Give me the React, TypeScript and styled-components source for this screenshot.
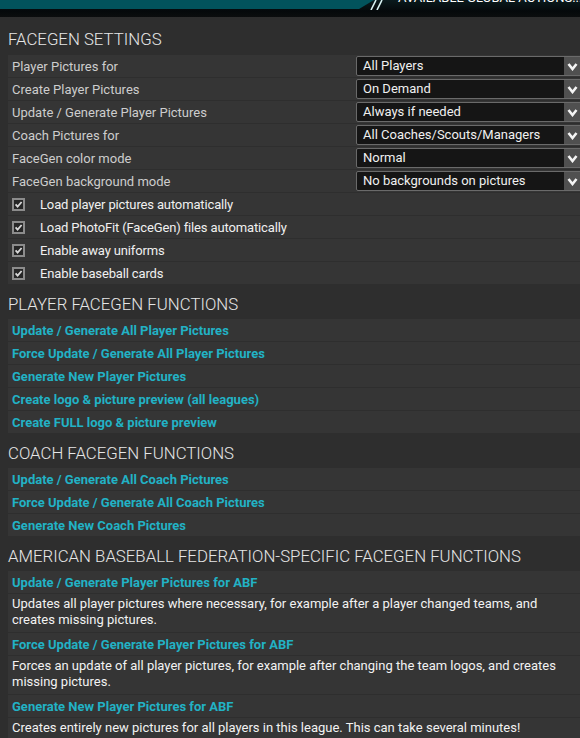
import styled, { createGlobalStyle } from "styled-components";

const GlobalStyle = createGlobalStyle`
    html, body {
        margin: 0;
        padding: 0;
        background: #2e2e2e;
        overflow: hidden;
    }
    body {
        font-family: Roboto, "Liberation Sans", sans-serif;
        width: 580px;
        height: 738px;
    }
`

const settings = [
    {label: "Player Pictures for", value: "All Players"},
    {label: "Create Player Pictures", value: "On Demand"},
    {label: "Update / Generate Player Pictures", value: "Always if needed"},
    {label: "Coach Pictures for", value: "All Coaches/Scouts/Managers"},
    {label: "FaceGen color mode", value: "Normal"},
    {label: "FaceGen background mode", value: "No backgrounds on pictures"},
];

const checks = [
    "Load player pictures automatically",
    "Load PhotoFit (FaceGen) files automatically",
    "Enable away uniforms",
    "Enable baseball cards",
];

const playerLinks = [
    "Update / Generate All Player Pictures",
    "Force Update / Generate All Player Pictures",
    "Generate New Player Pictures",
    "Create logo & picture preview (all leagues)",
    "Create FULL logo & picture preview",
];

const coachLinks = [
    "Update / Generate All Coach Pictures",
    "Force Update / Generate All Coach Pictures",
    "Generate New Coach Pictures",
];

const leagueLinks = [
    {
        link: "Update / Generate Player Pictures for ABF",
        text: "Updates all player pictures where necessary, for example after a player changed teams, and creates missing pictures.",
    },
    {
        link: "Force Update / Generate Player Pictures for ABF",
        text: "Forces an update of all player pictures, for example after changing the team logos, and creates missing pictures.",
    },
    {
        link: "Generate New Player Pictures for ABF",
        text: "Creates entirely new pictures for all players in this league. This can take several minutes!",
    },
];

const Chevron = () => (
    <svg width="11" height="9" viewBox="0 0 11 9">
        <polyline points="1.5,2 5.5,7 9.5,2" fill="none" stroke="#f4f4f4" strokeWidth="2.6"/>
    </svg>
);

const CheckIcon = () => (
    <svg width="13" height="13" viewBox="0 0 13 13">
        <rect x="1" y="1" width="11" height="11" fill="#262626" stroke="#8c8c8c" strokeWidth="2"/>
        <polyline points="3.6,6.4 5.6,8.6 9.6,4" fill="none" stroke="#d8d8d8" strokeWidth="1.8"/>
    </svg>
);

export default function App() {
    return (
        <Page>
            <GlobalStyle/>
            <TopBar>
                <TealBand/>
                <Slashes width="16" height="10" viewBox="0 0 16 10">
                    <line x1="6" y1="0" x2="1" y2="10" stroke="#d9f3f3" strokeWidth="1.6"/>
                    <line x1="12" y1="0" x2="7" y2="10" stroke="#d9f3f3" strokeWidth="1.6"/>
                </Slashes>
                <TopTitle>Available Global Actions...</TopTitle>
            </TopBar>
            <Panel>
                <Heading $first>FaceGen Settings</Heading>
                {settings.map((s) => (
                    <Row key={s.label}>
                        <Label>{s.label}</Label>
                        <Select>
                            <SelectValue>{s.value}</SelectValue>
                            <SelectArrow><Chevron/></SelectArrow>
                        </Select>
                    </Row>
                ))}
                {checks.map((c) => (
                    <CheckRow key={c}>
                        <CheckIcon/>
                        <CheckLabel>{c}</CheckLabel>
                    </CheckRow>
                ))}

                <Heading>Player FaceGen Functions</Heading>
                {playerLinks.map((l) => (
                    <Row key={l}><Link>{l}</Link></Row>
                ))}

                <Heading>Coach FaceGen Functions</Heading>
                {coachLinks.map((l) => (
                    <Row key={l}><Link>{l}</Link></Row>
                ))}

                <Heading>American Baseball Federation-specific FaceGen Functions</Heading>
                {leagueLinks.map((l) => (
                    <div key={l.link}>
                        <Row><Link>{l.link}</Link></Row>
                        <DescRow>{l.text}</DescRow>
                    </div>
                ))}
            </Panel>
        </Page>
    );
}

const Page = styled.div`
    width: 580px;
    height: 738px;
    overflow: hidden;
    background: #2e2e2e;
`
const TopBar = styled.div`
    height: 17px;
    display: flex;
    align-items: flex-start;
    overflow: hidden;
    background: linear-gradient(to bottom, #0a1a1d 0px, #05090b 11px, #0b0d0e 17px);
`
const TealBand = styled.div`
    width: 374px;
    height: 9px;
    flex-shrink: 0;
    background: #02535c;
    clip-path: polygon(0 0, 100% 0, 96% 100%, 0 100%);
`
const Slashes = styled.svg`
    flex-shrink: 0;
    margin-left: -4px;
`
const TopTitle = styled.div`
    margin-left: 12px;
    margin-top: -10px;
    font-size: 13px;
    line-height: 16px;
    color: #ffffff;
    text-transform: uppercase;
    white-space: nowrap;
`
const Panel = styled.div`
    padding-top: 3px;
    background: #2e2e2e;
`
const Heading = styled.h2<{ $first?: boolean }>`
    margin: 0;
    padding: 9px 0 ${(p) => (p.$first ? "6px" : "5px")} 8px;
    font-size: 16.8px;
    line-height: 20px;
    font-weight: 300;
    color: #e6e6e6;
    text-transform: uppercase;
    white-space: nowrap;
`
const Row = styled.div`
    margin: 0 0 1px 8px;
    height: 22px;
    padding-left: 4px;
    display: flex;
    align-items: center;
    background: #353535;
`
const Label = styled.span`
    width: 344px;
    flex-shrink: 0;
    font-size: 13px;
    color: #cdcdcd;
`
const Select = styled.div`
    width: 230px;
    height: 20px;
    flex-shrink: 0;
    box-sizing: border-box;
    display: flex;
    border: 1px solid #6a6a6a;
    border-radius: 2px;
    background: #151515;
    overflow: hidden;
`
const SelectValue = styled.span`
    flex: 1;
    padding-left: 6px;
    font-size: 13px;
    line-height: 18px;
    color: #f0f0f0;
    white-space: nowrap;
`
const SelectArrow = styled.span`
    width: 21px;
    display: flex;
    align-items: center;
    padding-left: 3px;
    box-sizing: border-box;
    background: #505050;
`
const CheckRow = styled(Row)`
    gap: 15px;
`
const CheckLabel = styled.span`
    font-size: 13px;
    letter-spacing: -0.14px;
    color: #f0f0f0;
`
const Link = styled.span`
    font-size: 13px;
    font-weight: 700;
    color: #22b2c5;
    white-space: nowrap;
`
const DescRow = styled.div`
    margin: 0 0 1px 8px;
    padding: 2px 14px 4px 4px;
    font-size: 13px;
    line-height: 16px;
    color: #f2f2f2;
    background: #353535;
`
